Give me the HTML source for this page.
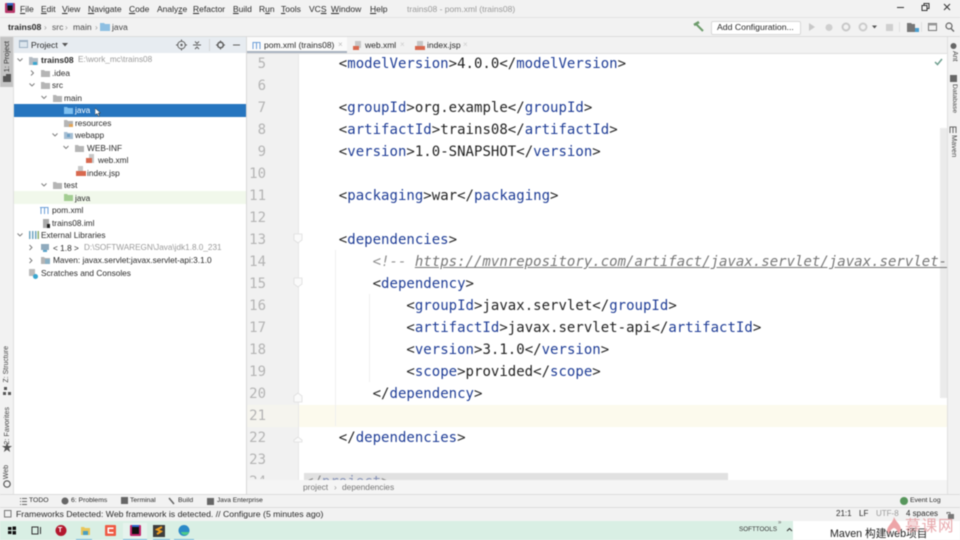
<!DOCTYPE html>
<html><head><meta charset="utf-8"><style>
html,body{margin:0;padding:0;background:#f2f2f2}
#r{position:relative;width:960px;height:540px;overflow:hidden;background:#f2f2f2;font-family:"Liberation Sans","Noto Sans CJK SC",sans-serif;font-size:8.3px;color:#2a2a2a;filter:blur(.4px)}
#r div,#r span.a,#r svg{position:absolute}
.t{white-space:nowrap;line-height:12px}
.m{top:3px;font-size:8.500px}
.g{color:#9a9a9a}
.v{writing-mode:vertical-rl;white-space:nowrap;font-size:7px;line-height:12px;color:#444}
.l{transform:rotate(180deg)}
.n{font:14px/22px "DejaVu Sans Mono",monospace;color:#b4b4b4;left:240px;width:26px;text-align:right;transform:translateY(2px)}
.c{font:14px/22px "DejaVu Sans Mono",monospace;color:#222;left:305px;white-space:pre;height:22px;letter-spacing:.02px;transform:translateY(2px)}
.c b{font-weight:normal;color:#1f3d96}
.c i{color:#8f8f8f}
.c u{color:#777}
.w{font-size:6.800px;top:495px}
.s{font-size:8px;top:508px}
</style></head><body><div id="r">

<!-- title -->
<div style="left:0;top:17px;width:960px;height:1px;background:#e2e2e2"></div>
<svg style="left:5px;top:3px" width="10" height="10"><rect width="10" height="10" rx="1" fill="#b7386a"/><rect x="2" y="0" width="6" height="5" fill="#2f5fc0"/><rect x="2.5" y="2.5" width="5" height="5" fill="#111"/></svg>
<div class="t m" style="left:20px"><u>F</u>ile</div>
<div class="t m" style="left:41px"><u>E</u>dit</div>
<div class="t m" style="left:62px"><u>V</u>iew</div>
<div class="t m" style="left:88px"><u>N</u>avigate</div>
<div class="t m" style="left:129px"><u>C</u>ode</div>
<div class="t m" style="left:157px">Analy<u>z</u>e</div>
<div class="t m" style="left:193px"><u>R</u>efactor</div>
<div class="t m" style="left:233px"><u>B</u>uild</div>
<div class="t m" style="left:259px">R<u>u</u>n</div>
<div class="t m" style="left:281px"><u>T</u>ools</div>
<div class="t m" style="left:309px">VC<u>S</u></div>
<div class="t m" style="left:331px"><u>W</u>indow</div>
<div class="t m" style="left:370px"><u>H</u>elp</div>
<div class="t m g" style="left:407px;font-size:8.500px">trains08 - pom.xml (trains08)</div>
<svg style="left:895px;top:1px" width="60" height="12" fill="none" stroke="#333"><path d="M2 6.500h7"/><path d="M27 4.500h5v5h-5zM29 4.500v-2h5v5h-2"/><path d="M49 3l6 6M55 3l-6 6"/></svg>

<!-- nav -->
<div style="left:0;top:36px;width:960px;height:1px;background:#dcdcdc"></div>
<div class="t" style="left:8px;top:21px;font-weight:bold;font-size:8.700px">trains08</div>
<div class="t g" style="left:44px;top:21px">›</div>
<div class="t" style="left:52px;top:21px;color:#555;font-size:8.600px">src</div>
<div class="t g" style="left:65px;top:21px">›</div>
<div class="t" style="left:73px;top:21px;color:#444;font-size:8.600px">main</div>
<div class="t g" style="left:95px;top:21px">›</div>
<svg style="left:100px;top:23px" width="10" height="8"><path d="M0 0h4l1 1h5v7H0z" fill="#8ebfe2"/></svg>
<div class="t" style="left:112px;top:21px;color:#444;font-size:8.600px">java</div>

<!-- run toolbar -->
<svg style="left:693px;top:21px" width="13" height="12" fill="none" stroke="#6d9c6c" stroke-width="2"><path d="M3 3l7 7"/><path d="M1 4l5-3" stroke-width="2.500"/></svg>
<div style="left:711px;top:21px;width:88px;height:12px;background:#fff;border:1px solid #d8d8d8;border-radius:2px"></div>
<div class="t" style="left:717px;top:21px;font-size:8.700px">Add Configuration...</div>
<svg style="left:806px;top:20px" width="154" height="14"><path d="M3 3l6 4-6 4z" fill="#c8c8c8"/><circle cx="23" cy="7.500" r="3.500" fill="#cfcfcf"/><circle cx="40" cy="7" r="3.500" fill="none" stroke="#c8c8c8" stroke-width="2"/><circle cx="57" cy="7" r="3.500" fill="none" stroke="#cccccc" stroke-width="2"/><path d="M66 5.500h5l-2.500 3z" fill="#555"/><rect x="80" y="4" width="7" height="7" fill="#cfcfcf"/><rect x="93" y="2" width="1" height="10" fill="#e0e0e0"/><path d="M101 3h4l1 1h3v8h-8z" fill="#777"/><rect x="109" y="8" width="4" height="4" fill="#4a9fd0"/><rect x="115" y="2" width="1" height="10" fill="#e0e0e0"/><rect x="122.500" y="3.500" width="8" height="7" fill="none" stroke="#777"/><rect x="122.500" y="3.500" width="8" height="2" fill="#999"/><circle cx="143" cy="6" r="3" fill="none" stroke="#666" stroke-width="1.200"/><path d="M145 8.500l3 3" stroke="#666" stroke-width="1.300"/></svg>

<!-- left strip -->
<div style="left:0;top:37px;width:13px;height:50px;background:#c4c4c4"></div>
<div style="left:13px;top:37px;width:1px;height:457px;background:#e0e0e0"></div>
<div class="v l" style="left:1px;top:41px;color:#333;font-size:7.400px">1: Project</div>
<svg style="left:3px;top:74px" width="8" height="8"><path d="M0 0h8v8H0z" fill="#555"/><path d="M0 0h3v2H0z" fill="#c4c4c4"/></svg>
<div class="v l" style="left:1px;top:346px">Z: Structure</div>
<svg style="left:3px;top:387px" width="8" height="8"><path d="M1 0h3v3H1zM0 5h3v3H0zM5 5h3v3H5z" fill="#555"/></svg>
<div class="v l" style="left:1px;top:407px;font-size:7.200px">2: Favorites</div>
<div class="t" style="left:1px;top:441px;font-size:11px;line-height:14px;color:#555;width:12px;text-align:center">★</div>
<div class="v l" style="left:1px;top:465px">Web</div>
<svg style="left:3px;top:480px" width="8" height="8"><circle cx="4" cy="4" r="3.200" fill="none" stroke="#555" stroke-width="1.200"/></svg>

<!-- project header -->
<div style="left:14px;top:37px;width:233px;height:16px;background:#e7ecf1"></div>
<svg style="left:19px;top:40px" width="9" height="8"><rect width="9" height="8" fill="#9fb2c4"/><rect x="1" y="2" width="7" height="5" fill="#dde6ee"/></svg>
<div class="t" style="left:31px;top:39px;font-size:8.600px">Project</div>
<svg style="left:62px;top:43px" width="6" height="4"><path d="M0 0h6l-3 3.500z" fill="#555"/></svg>
<svg style="left:176px;top:39px" width="70" height="12" fill="none" stroke="#5f5f5f"><circle cx="5.500" cy="6" r="3.800"/><circle cx="5.500" cy="6" r="1.200" fill="#5f5f5f" stroke="none"/><path d="M5.500 .5v2M5.500 9.500v2M0 6h2M9 6h2"/><path d="M17 6h8M19 2.500l2 2 2-2M19 10l2-2 2 2"/><rect x="33" y="0" width="1" height="12" fill="#d5d5d5" stroke="none"/><circle cx="44.500" cy="6" r="2.800" stroke-width="1.600"/><path d="M44.500 1.500v1.500M44.500 9v1.500M40 6h1.500M47.500 6H49"/><path d="M57 6h7"/></svg>

<!-- tree -->
<div style="left:14px;top:53px;width:232px;height:441px;background:#fff"></div>
<div style="left:14px;top:104px;width:232px;height:13px;background:#2675bf"></div>
<div style="left:14px;top:191px;width:232px;height:13px;background:#f1f8eb"></div>
<svg style="left:14px;top:53px" width="100" height="226" fill="none" stroke="#777" stroke-width=".9">
<path d="M3.500 5.500l2.500 2.500 2.500-2.500M17 17.500l2.500 2.500-2.500 2.500M15.500 30.500l2.500 2.500 2.500-2.500M27.500 43l2.500 2.500 2.500-2.500M38.500 80.500l2.500 2.500 2.500-2.500M49.500 93l2.500 2.500 2.500-2.500M27.500 130.500l2.500 2.500 2.500-2.500M3.500 180.500l2.500 2.500 2.500-2.500M15.500 192l2.500 2.500-2.500 2.500M15.500 205l2.500 2.500-2.500 2.500"/>
<g stroke="none">
<path d="M15 4h3l1 1h5v7h-9z" fill="#b4bcc4"/><rect x="19" y="9" width="4" height="3" fill="#3aa6cf"/>
<path d="M27 17h3l1 1h5v6h-9z" fill="#b5b5b5"/>
<path d="M27 29h3l1 1h5v6h-9z" fill="#b5b5b5"/>
<path d="M39 42h3l1 1h5v6h-9z" fill="#b5b5b5"/>
<path d="M50 54h3l1 1h5v6h-9z" fill="#7fc0f0"/>
<path d="M50 67h3l1 1h5v6h-9z" fill="#b5b5b5"/><rect x="55" y="71" width="4" height="3" fill="#e2a458"/>
<path d="M50 79h3l1 1h5v6h-9z" fill="#a6bed3"/><rect x="53" y="81" width="3" height="3" fill="#6d9fc4"/>
<path d="M61 92h3l1 1h5v6h-9z" fill="#b5b5b5"/>
<path d="M75 101h5v9h-5z" fill="#c7c7c7"/><rect x="72" y="105" width="6" height="5" fill="#d8694f"/>
<path d="M64 113h5v9h-5z" fill="#c7c7c7"/><rect x="62" y="118" width="10" height="5" fill="#d8694f"/>
<path d="M39 129h3l1 1h5v6h-9z" fill="#b5b5b5"/>
<path d="M50 141h3l1 1h5v6h-9z" fill="#a3cd92"/>
<rect x="29" y="166" width="6" height="9" fill="#aaa"/><rect x="33" y="171" width="3" height="4" fill="#222"/>
<path d="M15 178h1.500v8H15zM18 178h1.500v8H18zM21 178h1.500v8H21z" fill="#6fa6c0"/><rect x="23.500" y="178" width="1.500" height="8" fill="#8fb070"/>
<path d="M27 191h8v6h-8z" fill="#8faabd"/><rect x="29" y="197" width="4" height="2" fill="#5aa5cc"/>
<path d="M27 204h3l1 1h5v6h-9z" fill="#b5b5b5"/><rect x="31" y="206" width="5" height="5" fill="#8ab0c4"/>
<rect x="15" y="216" width="6" height="7" fill="#bbb"/><circle cx="21.500" cy="223.500" r="2.500" fill="#3aa6cf"/>
</g></svg>
<div class="t" style="left:41px;top:54px;font-weight:bold;font-size:8.500px">trains08</div>
<div class="t g" style="left:78px;top:54px;font-size:8.200px">E:\work_mc\trains08</div>
<div class="t" style="left:52px;top:67px">.idea</div>
<div class="t" style="left:52px;top:79px">src</div>
<div class="t" style="left:64px;top:92px">main</div>
<div class="t" style="left:75px;top:104px;color:#fff">java</div>
<svg style="left:95px;top:108px" width="6" height="9"><path d="M0 0v7l2-1.500 1.500 3 1-.5-1.300-3H5.500z" fill="#fff" stroke="#222" stroke-width=".5"/></svg>
<div class="t" style="left:75px;top:117px">resources</div>
<div class="t" style="left:75px;top:129px">webapp</div>
<div class="t" style="left:87px;top:142px">WEB-INF</div>
<div class="t" style="left:98px;top:154px">web.xml</div>
<div class="t" style="left:87px;top:167px">index.jsp</div>
<div class="t" style="left:64px;top:179px">test</div>
<div class="t" style="left:75px;top:192px">java</div>
<svg style="left:40px;top:206px" width="11" height="8" fill="none" stroke="#6c9fd8" stroke-width="1"><path d="M1 8V1.500h3.500V8M4.500 1.500H8V8M1 1.500H0"/></svg>
<div class="t" style="left:52px;top:204px">pom.xml</div>
<div class="t" style="left:52px;top:217px">trains08.iml</div>
<div class="t" style="left:41px;top:229px">External Libraries</div>
<div class="t" style="left:53px;top:242px">&lt; 1.8 &gt;</div>
<div class="t g" style="left:84px;top:242px;font-size:8.200px">D:\SOFTWAREGN\Java\jdk1.8.0_231</div>
<div class="t" style="left:53px;top:254px">Maven: javax.servlet:javax.servlet-api:3.1.0</div>
<div class="t" style="left:41px;top:267px">Scratches and Consoles</div>

<!-- tabs -->
<div style="left:246px;top:37px;width:1px;height:457px;background:#d8d8d8"></div>
<div style="left:247px;top:37px;width:701px;height:16px;background:#f2f2f2"></div>
<div style="left:247px;top:53px;width:700px;height:1px;background:#e0e0e0"></div>
<div style="left:247px;top:37px;width:100px;height:14px;background:#fbfbfb"></div>
<div style="left:247px;top:51px;width:100px;height:2px;background:#a9b3c0"></div>
<svg style="left:252px;top:41px" width="11" height="8" fill="none" stroke="#6c9fd8"><path d="M1 8V1.500h3.500V8M4.500 1.500H8V8"/></svg>
<div class="t" style="left:264px;top:39px;font-size:8.500px">pom.xml (trains08)</div>
<div class="t" style="left:338px;top:39px;color:#bbb;font-size:8px">×</div>
<svg style="left:353px;top:41px" width="10" height="10"><rect x="2" y="0" width="6" height="7" fill="#c7c7c7"/><rect x="0" y="5" width="6" height="4" fill="#d8694f"/></svg>
<div class="t" style="left:365px;top:39px;font-size:8.500px">web.xml</div>
<div class="t" style="left:400px;top:39px;color:#ccc;font-size:8px">×</div>
<svg style="left:415px;top:41px" width="10" height="10"><rect x="2" y="0" width="6" height="7" fill="#c7c7c7"/><rect x="0" y="5" width="10" height="4" fill="#d8694f"/></svg>
<div class="t" style="left:427px;top:39px;font-size:8.500px">index.jsp</div>
<div class="t" style="left:463px;top:39px;color:#ccc;font-size:8px">×</div>

<!-- editor -->
<div id="e" style="left:247px;top:54px;width:700px;height:426px;background:#fff;overflow:hidden"></div>
<div style="left:247px;top:54px;width:51px;height:426px;background:#f1f1f1"></div>
<div style="left:298px;top:54px;width:1px;height:426px;background:#e8e8e8"></div>
<div style="left:299px;top:405px;width:648px;height:22px;background:#fcfaed"></div>
<div style="left:247px;top:405px;width:51px;height:22px;background:#f5f4ee"></div>
<div style="left:335px;top:250px;width:1px;height:176px;background:#efefef"></div>
<div style="left:369px;top:294px;width:1px;height:88px;background:#efefef"></div>
<svg style="left:292px;top:233px" width="12" height="210" fill="#fafafa" stroke="#dedede" stroke-width=".8"><path d="M2 1h8v6l-4 3-4-3z"/><path d="M2 45h8v6l-4 3-4-3z"/><path d="M2 163l4-3 4 3v6H2z"/><path d="M2 207l4-3 4 3v2H2z"/></svg>

<div class="n" style="top:51px">5</div><div class="n" style="top:73px">6</div><div class="n" style="top:95px">7</div><div class="n" style="top:117px">8</div><div class="n" style="top:139px">9</div><div class="n" style="top:161px">10</div><div class="n" style="top:183px">11</div><div class="n" style="top:205px">12</div><div class="n" style="top:227px">13</div><div class="n" style="top:249px">14</div><div class="n" style="top:271px">15</div><div class="n" style="top:293px">16</div><div class="n" style="top:315px">17</div><div class="n" style="top:337px">18</div><div class="n" style="top:359px">19</div><div class="n" style="top:381px">20</div><div class="n" style="top:403px">21</div><div class="n" style="top:425px">22</div><div class="n" style="top:447px">23</div>

<div class="c" style="top:51px">    &lt;<b>modelVersion</b>&gt;4.0.0&lt;/<b>modelVersion</b>&gt;</div>
<div class="c" style="top:95px">    &lt;<b>groupId</b>&gt;org.example&lt;/<b>groupId</b>&gt;</div>
<div class="c" style="top:117px">    &lt;<b>artifactId</b>&gt;trains08&lt;/<b>artifactId</b>&gt;</div>
<div class="c" style="top:139px">    &lt;<b>version</b>&gt;1.0-SNAPSHOT&lt;/<b>version</b>&gt;</div>
<div class="c" style="top:183px">    &lt;<b>packaging</b>&gt;war&lt;/<b>packaging</b>&gt;</div>
<div class="c" style="top:227px">    &lt;<b>dependencies</b>&gt;</div>
<div class="c" style="top:249px;width:642px;overflow:hidden;z-index:1">        <i>&lt;!-- <u>https://mvnrepository.com/artifact/javax.servlet/javax.servlet-api</u></i></div>
<div class="c" style="top:271px">        &lt;<b>dependency</b>&gt;</div>
<div class="c" style="top:293px">            &lt;<b>groupId</b>&gt;javax.servlet&lt;/<b>groupId</b>&gt;</div>
<div class="c" style="top:315px">            &lt;<b>artifactId</b>&gt;javax.servlet-api&lt;/<b>artifactId</b>&gt;</div>
<div class="c" style="top:337px">            &lt;<b>version</b>&gt;3.1.0&lt;/<b>version</b>&gt;</div>
<div class="c" style="top:359px">            &lt;<b>scope</b>&gt;provided&lt;/<b>scope</b>&gt;</div>
<div class="c" style="top:381px">        &lt;/<b>dependency</b>&gt;</div>
<div class="c" style="top:425px">    &lt;/<b>dependencies</b>&gt;</div>
<div class="c" style="top:469px;height:9px;overflow:hidden">&lt;/<b>project</b>&gt;</div>
<div class="n" style="top:469px;height:8px;overflow:hidden">24</div>

<div style="left:304px;top:473px;width:424px;height:7px;background:rgba(205,205,205,.6)"></div>
<div style="left:940px;top:128px;width:7px;height:270px;background:#ebebeb"></div>
<svg style="left:934px;top:58px" width="9" height="8" fill="none" stroke="#6f9f8f" stroke-width="1.500"><path d="M1 4l2.500 2.500L8 1"/></svg>

<!-- right strip -->
<div style="left:947px;top:37px;width:1px;height:457px;background:#e0e0e0"></div>
<svg style="left:949px;top:42px" width="9" height="92" fill="#666"><circle cx="4.500" cy="4" r="3"/><rect x="1" y="33" width="7" height="7"/><path d="M1 91V85h3v6M4 85h3v6" fill="none" stroke="#666"/></svg>
<div class="v" style="left:948px;top:51px">Ant</div>
<div class="v" style="left:948px;top:84px;font-size:6.800px">Database</div>
<div class="v" style="left:948px;top:135px;font-size:7.400px">Maven</div>

<!-- breadcrumb -->
<div style="left:247px;top:480px;width:700px;height:14px;background:#f5f5f5"></div>
<div class="t" style="left:303px;top:481px;color:#777;font-size:8.400px">project</div>
<div class="t g" style="left:334px;top:481px">›</div>
<div class="t" style="left:342px;top:481px;color:#777;font-size:8.400px">dependencies</div>

<!-- tool bar -->
<div style="left:0;top:494px;width:960px;height:1px;background:#dcdcdc"></div>
<div style="left:0;top:507px;width:960px;height:1px;background:#dcdcdc"></div>
<svg style="left:20px;top:497px" width="250" height="9" fill="#666"><path d="M0 1h1v1H0zM2 1h5v1H2zM0 4h1v1H0zM2 4h5v1H2zM0 7h1v1H0zM2 7h5v1H2z"/><circle cx="45" cy="4" r="3.500"/><rect x="101" y="0" width="7" height="7"/><path d="M149 1l5 6" stroke="#666" stroke-width="1.500"/><rect x="187" y="1" width="7" height="7"/></svg>
<div class="t w" style="left:29px">TODO</div>
<div class="t w" style="left:71px">6: Problems</div>
<div class="t w" style="left:130px">Terminal</div>
<div class="t w" style="left:178px">Build</div>
<div class="t w" style="left:217px;font-size:6.600px">Java Enterprise</div>
<svg style="left:900px;top:497px" width="9" height="9"><circle cx="4" cy="4" r="4" fill="#57965c"/></svg>
<div class="t w" style="left:910px">Event Log</div>

<!-- status -->
<svg style="left:4px;top:510px" width="8" height="8"><rect x=".5" y=".5" width="6.500" height="6.500" fill="none" stroke="#777"/></svg>
<div class="t" style="left:16px;top:508px;font-size:8.700px">Frameworks Detected: Web framework is detected. // Configure (5 minutes ago)</div>
<div class="t s" style="left:836px">21:1</div>
<div class="t s" style="left:859px">LF</div>
<div class="t s g" style="left:876px">UTF-8</div>
<div class="t s" style="left:906px">4 spaces</div>
<svg style="left:946px;top:511px" width="8" height="8"><rect x="2" y="3" width="6" height="5" fill="#777"/><path d="M1 3V1.500h3V3" fill="none" stroke="#777"/></svg>

<!-- taskbar -->
<div style="left:0;top:521px;width:960px;height:19px;background:#d9efe4"></div>
<svg style="left:0;top:521px" width="200" height="19"><path d="M8 6h3.500v3H8zM12.500 5.500H16V9h-3.500zM8 10h3.500v3H8zM12.500 10H16v3.500h-3.500z" fill="#111"/><path d="M32 6h6v7h-6z" fill="none" stroke="#333"/><path d="M40 6h1v7h-1z" fill="#333"/><circle cx="61" cy="9.500" r="5.500" fill="#b3182e"/><path d="M81 6h3l1 1h5v7h-9z" fill="#e8c65a"/><rect x="83" y="10" width="5" height="4" fill="#4a9fc0"/><rect x="105" y="4" width="11" height="11" rx="1" fill="#ee5a44"/><rect x="107.500" y="6.500" width="6" height="6" fill="#fff"/><rect x="109" y="8" width="5" height="3" fill="#ee5a44"/><rect x="123" y="2" width="24" height="17" fill="#e6f3ed"/><rect x="130" y="4" width="11" height="11" rx="1" fill="#c2246c"/><rect x="132" y="4" width="7" height="7" fill="#2b62c8"/><rect x="132" y="6" width="7" height="7" fill="#111"/><rect x="153" y="4" width="12" height="12" fill="#3d3d3d"/><path d="M162 6l-5 2.500 4 2-4 2.500" fill="none" stroke="#f0a020" stroke-width="2"/><circle cx="184" cy="9.500" r="5.500" fill="#2b8ac8"/><path d="M181 11a4 3 0 0 0 8 0z" fill="#4ecb8a"/></svg>
<div class="t" style="left:58px;top:525px;font-size:7px;color:#fff;font-weight:bold">T</div>
<div style="left:76px;top:539px;width:16px;height:1px;background:#6fb5d8"></div>
<div style="left:123px;top:539px;width:24px;height:1px;background:#6fb5d8"></div>
<div style="left:153px;top:539px;width:17px;height:1px;background:#6fb5d8"></div>
<div style="left:174px;top:539px;width:20px;height:1px;background:#6fb5d8"></div>
<div class="t" style="left:739px;top:524px;font-size:6.300px;color:#333">SOFTTOOLS</div>
<div class="t" style="left:778px;top:517px;font-size:6px;color:#666">»</div>
<svg style="left:786px;top:527px" width="7" height="5" fill="none" stroke="#333"><path d="M1 4l2.500-2.500L6 4"/></svg>
<div style="left:793px;top:521px;width:167px;height:19px;background:#fff"></div>
<div class="t" style="left:830px;top:528px;font-size:10.700px;color:#222">Maven 构建web项目</div>
<div class="t" style="left:905px;top:519px;font-size:15.500px;line-height:16px;color:#e8a9ad;letter-spacing:1px">慕课网</div>
<svg style="left:887px;top:517px" width="15" height="18"><path d="M7 0c2 5 7 8 7 13l-3 4c0-4-3-6-4-6s-4 2-5 6l-2-3c0-5 6-8 7-14z" fill="#eda5a8"/></svg>
</div></body></html>
